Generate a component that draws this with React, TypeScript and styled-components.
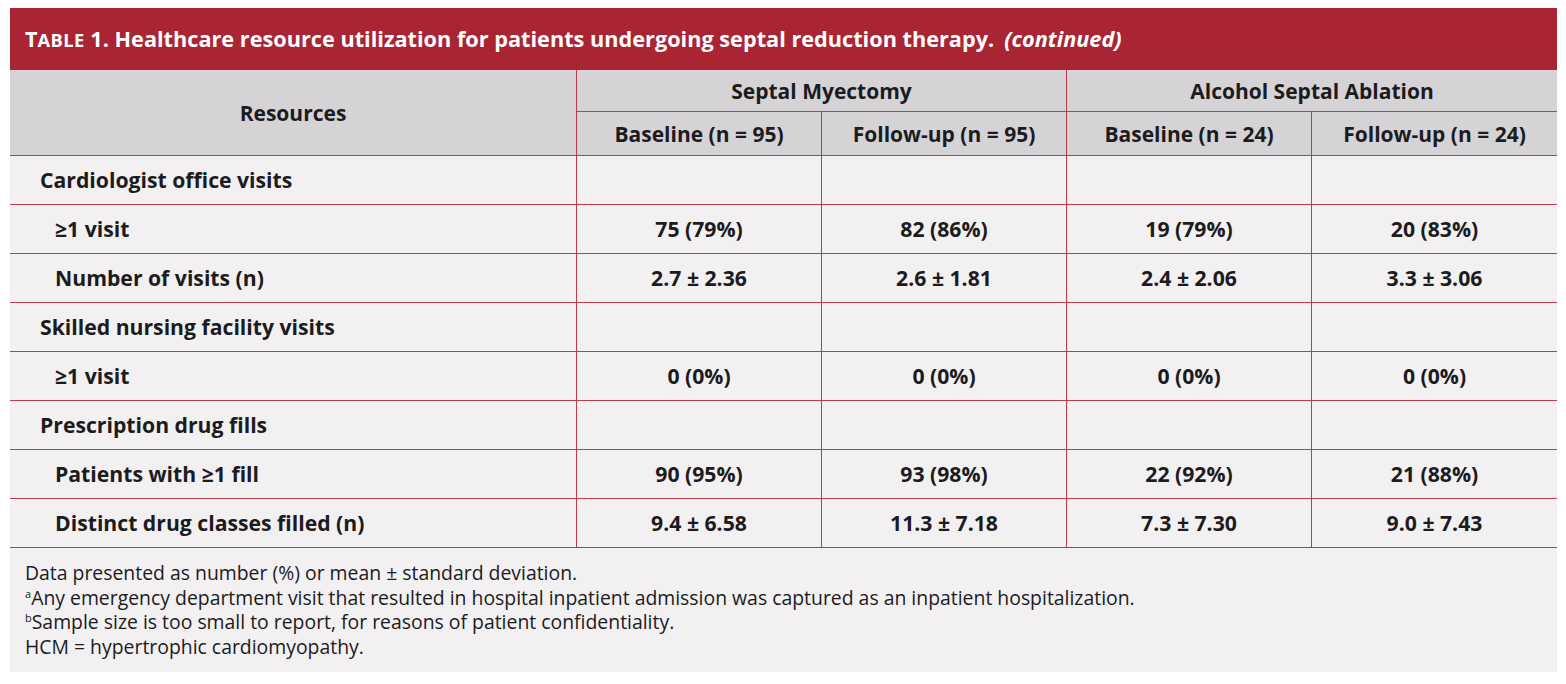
import React from "react";
import styled, { createGlobalStyle } from "styled-components";

const GlobalStyle = createGlobalStyle`
  html, body {
    margin: 0;
    padding: 0;
    background: #ffffff;
  }
  body {
    font-family: "Open Sans", Lato, sans-serif;
    color: #1c1b1d;
  }
`;

const RED = "#a92534";
const LINE = "#c23a48";

const Page = styled.div`
  padding: 8px 9px 12px 10px;
`;

const Card = styled.div`
  width: 1547px;
  background: #f2f0f1;
`;

const TitleBar = styled.div`
  height: 62px;
  background: ${RED};
  color: #ffffff;
  display: flex;
  align-items: center;
  padding: 0 0 2px 15px;
  box-sizing: border-box;
  font-size: 21.7px;
  font-weight: 700;
`;

// the journal sets "Table" in small caps, a touch taller than Open Sans' synthetic ones
const SmallCaps = styled.span`
  font-size: 18.3px;
  text-transform: uppercase;
  letter-spacing: 0.4px;
`;

const Continued = styled.em`
  font-style: italic;
  margin-left: 10px;
`;

const HeadBlock = styled.div`
  display: grid;
  grid-template-columns: 566px 245px 245px 245px 246px;
  grid-template-rows: 42px 43px;
  border-bottom: 1.5px solid ${LINE};
`;

const HeadCell = styled.div<{ $row: string; $col: string; $left?: boolean; $bottom?: boolean }>`
  grid-row: ${(p) => p.$row};
  grid-column: ${(p) => p.$col};
  background: #d5d3d6;
  display: flex;
  align-items: center;
  justify-content: center;
  font-size: 21px;
  font-weight: 700;
  box-sizing: border-box;
  border-left: ${(p) => (p.$left ? `1.5px solid ${LINE}` : "none")};
  border-bottom: ${(p) => (p.$bottom ? `1.5px solid ${LINE}` : "none")};
`;

const Body = styled.div`
  display: grid;
  grid-template-columns: 566px 245px 245px 245px 246px;
  grid-auto-rows: 49px;
`;

const Cell = styled.div<{ $indent?: number; $first?: boolean }>`
  display: flex;
  align-items: center;
  justify-content: ${(p) => (p.$first ? "flex-start" : "center")};
  padding-left: ${(p) => (p.$first ? `${p.$indent ?? 30}px` : "0")};
  padding-bottom: 2px;
  box-sizing: border-box;
  font-size: 21.2px;
  font-weight: 700;
  border-bottom: 1.5px solid ${LINE};
  border-left: ${(p) => (p.$first ? "none" : `1.5px solid ${LINE}`)};
`;

const Notes = styled.div`
  padding: 13px 15px 10px;
  font-size: 19.4px;
  line-height: 24.7px;
  font-weight: 400;
  height: 124px;
  box-sizing: border-box;
`;

const Sup = styled.sup`
  font-size: 11px;
  vertical-align: 7px;
  line-height: 0;
`;

type Row = { label: string; sub?: boolean; values?: string[] };

const rows: Row[] = [
  { label: "Cardiologist office visits" },
  { label: "≥1 visit", sub: true, values: ["75 (79%)", "82 (86%)", "19 (79%)", "20 (83%)"] },
  { label: "Number of visits (n)", sub: true, values: ["2.7 ± 2.36", "2.6 ± 1.81", "2.4 ± 2.06", "3.3 ± 3.06"] },
  { label: "Skilled nursing facility visits" },
  { label: "≥1 visit", sub: true, values: ["0 (0%)", "0 (0%)", "0 (0%)", "0 (0%)"] },
  { label: "Prescription drug fills" },
  { label: "Patients with ≥1 fill", sub: true, values: ["90 (95%)", "93 (98%)", "22 (92%)", "21 (88%)"] },
  {
    label: "Distinct drug classes filled (n)",
    sub: true,
    values: ["9.4 ± 6.58", "11.3 ± 7.18", "7.3 ± 7.30", "9.0 ± 7.43"],
  },
];

const App = () => {
  return (
    <>
      <GlobalStyle />
      <Page>
        <Card>
          <TitleBar>
            <span>
              T<SmallCaps>able</SmallCaps> 1. Healthcare resource utilization for patients undergoing septal
              reduction therapy.
            </span>
            <Continued>(continued)</Continued>
          </TitleBar>
          <HeadBlock>
            <HeadCell $row="1 / 3" $col="1">Resources</HeadCell>
            <HeadCell $row="1" $col="2 / 4" $left $bottom>Septal Myectomy</HeadCell>
            <HeadCell $row="1" $col="4 / 6" $left $bottom>Alcohol Septal Ablation</HeadCell>
            <HeadCell $row="2" $col="2" $left>Baseline (n = 95)</HeadCell>
            <HeadCell $row="2" $col="3" $left>Follow-up (n = 95)</HeadCell>
            <HeadCell $row="2" $col="4" $left>Baseline (n = 24)</HeadCell>
            <HeadCell $row="2" $col="5" $left>Follow-up (n = 24)</HeadCell>
          </HeadBlock>
          <Body>
            {rows.map((r, i) => (
              <React.Fragment key={i}>
                <Cell $first $indent={r.sub ? 45 : 30}>{r.label}</Cell>
                {[0, 1, 2, 3].map((c) => (
                  <Cell key={c}>{r.values ? r.values[c] : ""}</Cell>
                ))}
              </React.Fragment>
            ))}
          </Body>
          <Notes>
            <div>Data presented as number (%) or mean ± standard deviation.</div>
            <div>
              <Sup>a</Sup>Any emergency department visit that resulted in hospital inpatient admission was captured as
              an inpatient hospitalization.
            </div>
            <div>
              <Sup>b</Sup>Sample size is too small to report, for reasons of patient confidentiality.
            </div>
            <div>HCM = hypertrophic cardiomyopathy.</div>
          </Notes>
        </Card>
      </Page>
    </>
  );
};

export default App;
